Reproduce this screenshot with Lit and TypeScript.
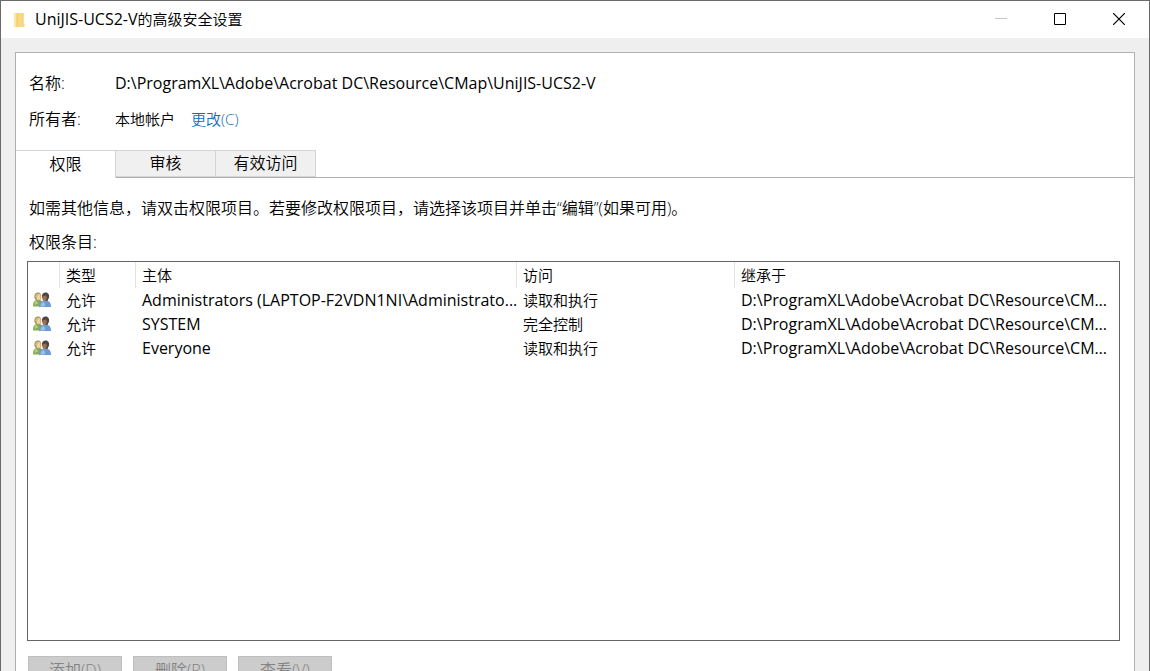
import { LitElement, html, css, svg } from "lit";
import { customElement, property, state } from "lit/decorators.js";
import { classMap } from "lit/directives/class-map.js";

interface PermissionEntry {
  type: string;
  principal: string;
  access: string;
  inherited: string;
}

const OBJECT_NAME = "UniJIS-UCS2-V";
const OBJECT_PATH = "D:\\ProgramXL\\Adobe\\Acrobat DC\\Resource\\CMap\\" + OBJECT_NAME;
const PARENT_PATH = "D:\\ProgramXL\\Adobe\\Acrobat DC\\Resource\\CMap\\";

const ENTRIES: PermissionEntry[] = [
  {
    type: "允许",
    principal: "Administrators (LAPTOP-F2VDN1NI\\Administrato...",
    access: "读取和执行",
    inherited: PARENT_PATH,
  },
  { type: "允许", principal: "SYSTEM", access: "完全控制", inherited: PARENT_PATH },
  { type: "允许", principal: "Everyone", access: "读取和执行", inherited: PARENT_PATH },
];

const folderIcon = svg`
  <svg width="12" height="16" viewBox="0 0 12 16" aria-hidden="true">
    <path d="M0 1h9.500v10.500h1V15H0z" fill="#f8d983" />
    <path d="M0 1h2.500v14H0z" fill="#fbe6a8" />
    <path d="M2.500 1h1.500v14H2.500z" fill="#f3cb6a" />
    <path d="M8 1h1.500v10H8z" fill="#f5d078" />
  </svg>`;

const usersIcon = svg`
  <svg width="18" height="16" viewBox="0 0 18 16" aria-hidden="true">
    <path d="M0 14.500c0-4 1-6 3.500-6.500h3.500c2 .6 3 2.500 3 6.500z" fill="#86ad52" />
    <path d="M1.500 13c0-2.500.7-3.700 2-4.200l1.500 2.700z" fill="#b2cf86" />
    <path d="M1.500 6c-.6-3.300 1-5.500 3.500-5.500S8.600 2.500 8.200 6l-1 2.500h-4z" fill="#a58a4c" />
    <ellipse cx="5.500" cy="5" rx="2.200" ry="3.200" fill="#ecd2a6" />
    <path d="M2 4.500C2.500 2 4 1 6.500 1.500L4.500 4l-1 3z" fill="#d3bd78" />
    <path d="M6 15c0-4 1.500-5.500 4-6.200h4c2.600.6 4 2.200 4 6.200z" fill="#6b9bd2" />
    <path d="M7.500 14.500c0-2.600 1-4 2.800-4.700l2.200 2.400-1 2.300z" fill="#9cc0e8" />
    <path d="M9 5c-.3-3 1.200-4.500 3.500-4.500s4 1.700 3.500 5l-1.500 3.500h-3.500z" fill="#51443c" />
    <path d="M9.300 4.200c1.200.3 2.200-.2 3-.9l1.700 2.200-1 3.500h-2L9.500 7.500z" fill="#96705a" />
  </svg>`;

@customElement("title-bar")
class TitleBar extends LitElement {
  @property() name = "";
  @property() heading = "";

  static styles = css`
    :host {
      display: flex;
      align-items: center;
      height: 37px;
      background: #fff;
    }
    .icon {
      display: flex;
      padding: 0 9px 0 13px;
    }
    .heading {
      flex: 1;
      margin: 0;
      padding-bottom: 2px;
      font-size: 15px;
      line-height: 20px;
      font-weight: inherit;
    }
    .latin {
      font-size: 16px;
      font-weight: 400;
    }
    .control {
      display: flex;
      align-items: center;
      justify-content: center;
      width: 59px;
      height: 37px;
      padding: 0 2px 2px 0;
      border: 0;
      background: transparent;
      color: #000;
    }
    .control:disabled {
      color: #c4c4c4;
    }
  `;

  render() {
    return html`
      <span class="icon">${folderIcon}</span>
      <h1 class="heading"><span class="latin">${this.name}</span>${this.heading}</h1>
      <button class="control" disabled aria-label="最小化">
        <svg width="12" height="12" viewBox="0 0 12 12" stroke="currentColor">
          <path d="M0 5.500h12" />
        </svg>
      </button>
      <button class="control" aria-label="最大化">
        <svg width="12" height="12" viewBox="0 0 12 12" fill="none" stroke="currentColor">
          <path d="M.5.5h11v11H.5z" />
        </svg>
      </button>
      <button class="control" aria-label="关闭">
        <svg width="12" height="12" viewBox="0 0 12 12" stroke="currentColor" stroke-width="1.200">
          <path d="M0 0l12 12M12 0L0 12" />
        </svg>
      </button>
    `;
  }
}

@customElement("permission-list")
class PermissionList extends LitElement {
  @property({ attribute: false }) entries: PermissionEntry[] = [];

  static styles = css`
    :host {
      display: block;
      min-height: 378px;
      border: 1px solid #646464;
      background: #fff;
    }
    .list {
      width: 100%;
      table-layout: fixed;
      border-collapse: separate;
      border-spacing: 0;
      font-size: 15px;
      line-height: 24px;
    }
    .col-icon {
      width: 32px;
    }
    .col-type {
      width: 76px;
    }
    .col-principal {
      width: 381px;
    }
    .col-access {
      width: 218px;
    }
    .head,
    .cell {
      box-sizing: border-box;
      padding: 0 0 0 6px;
      text-align: left;
      font-weight: inherit;
      white-space: nowrap;
      overflow: hidden;
      text-overflow: ellipsis;
    }
    .head {
      height: 26px;
      border-right: 1px solid #e3e3e3;
    }
    .head:last-child {
      border-right: 0;
    }
    .cell {
      height: 24px;
    }
    .latin {
      font-size: 16px;
      font-weight: 400;
    }
    .principal {
      overflow: visible;
    }
    .inherited {
      padding-right: 10px;
    }
    .users {
      padding: 0 0 0 5px;
    }
    .users svg {
      display: block;
    }
  `;

  render() {
    return html`
      <table class="list" aria-label="权限条目">
        <colgroup>
          <col class="col-icon" />
          <col class="col-type" />
          <col class="col-principal" />
          <col class="col-access" />
          <col />
        </colgroup>
        <thead>
          <tr>
            <th class="head"></th>
            <th class="head">类型</th>
            <th class="head">主体</th>
            <th class="head">访问</th>
            <th class="head">继承于</th>
          </tr>
        </thead>
        <tbody>
          ${this.entries.map(
            (e) => html`
              <tr>
                <td class="cell users">${usersIcon}</td>
                <td class="cell">${e.type}</td>
                <td class="cell latin principal">${e.principal}</td>
                <td class="cell">${e.access}</td>
                <td class="cell latin inherited">${e.inherited}</td>
              </tr>
            `
          )}
        </tbody>
      </table>
    `;
  }
}

@customElement("app-root")
class AppRoot extends LitElement {
  @state() private tab = 0;

  private tabs = ["权限", "审核", "有效访问"];
  private actions = ["添加(D)", "删除(R)", "查看(V)"];

  static styles = css`
    :host {
      display: flex;
      flex-direction: column;
      box-sizing: border-box;
      height: 100vh;
      overflow: hidden;
      border: 1px solid #6a6a6a;
      border-bottom: 0;
      background: #efefef;
      color: #000;
      font-family: "Open Sans", "Noto Sans CJK SC", sans-serif;
      font-size: 16px;
      font-weight: 350;
      line-height: 24px;
    }
    title-bar {
      flex: none;
    }
    .panel {
      flex: 1 0 auto;
      margin: 14px 14px 0;
      border: 1px solid #b0b0b0;
      border-bottom: 0;
      background: #fff;
    }
    .facts {
      display: grid;
      grid-template-columns: 86px 1fr;
      row-gap: 12px;
      margin: 0;
      padding: 18px 13px 19px;
    }
    .value {
      display: flex;
      gap: 16px;
      margin: 0;
      font-size: 15px;
    }
    .latin {
      font-size: 16px;
      font-weight: 400;
    }
    .link {
      color: #0f6cbd;
      text-decoration: none;
    }
    .tabs {
      display: flex;
      border-bottom: 1px solid #b0b0b0;
    }
    .tab {
      box-sizing: border-box;
      width: 100px;
      height: 27px;
      padding: 0 0 2px;
      border: 1px solid #d4d4d4;
      border-left: 0;
      background: #f0f0f0;
      color: inherit;
      font: inherit;
      line-height: 22px;
    }
    .selected {
      height: 28px;
      margin-bottom: -1px;
      border-bottom: 0;
      background: #fff;
    }
    .page {
      padding: 18px 14px 16px 11px;
    }
    .text {
      margin: 0 0 10px;
      padding-left: 2px;
    }
    .caption {
      margin-bottom: 7px;
    }
    .actions {
      display: flex;
      gap: 11px;
      padding: 15px 1px 0;
    }
    .action {
      width: 94px;
      height: 28px;
      padding: 0;
      border: 1px solid #bfbfbf;
      background: #cccccc;
      color: #838383;
      font: inherit;
      line-height: 24px;
    }
  `;

  render() {
    return html`
      <title-bar name=${OBJECT_NAME} heading="的高级安全设置"></title-bar>
      <main class="panel">
        <dl class="facts">
          <dt>名称:</dt>
          <dd class="value latin">${OBJECT_PATH}</dd>
          <dt>所有者:</dt>
          <dd class="value"><span>本地帐户</span><a class="link" href="#owner">更改(C)</a></dd>
        </dl>
        <div class="tabs" role="tablist">
          ${this.tabs.map(
            (name, i) => html`
              <button
                class=${classMap({ tab: true, selected: i === this.tab })}
                role="tab"
                aria-selected=${i === this.tab ? "true" : "false"}
                @click=${() => (this.tab = i)}
              >${name}</button>
            `
          )}
        </div>
        <section class="page">
          <p class="text">如需其他信息，请双击权限项目。若要修改权限项目，请选择该项目并单击“编辑”(如果可用)。</p>
          <p class="text caption">权限条目:</p>
          <permission-list .entries=${ENTRIES}></permission-list>
          <div class="actions">
            ${this.actions.map((a) => html`<button class="action" disabled>${a}</button>`)}
          </div>
        </section>
      </main>
    `;
  }
}
